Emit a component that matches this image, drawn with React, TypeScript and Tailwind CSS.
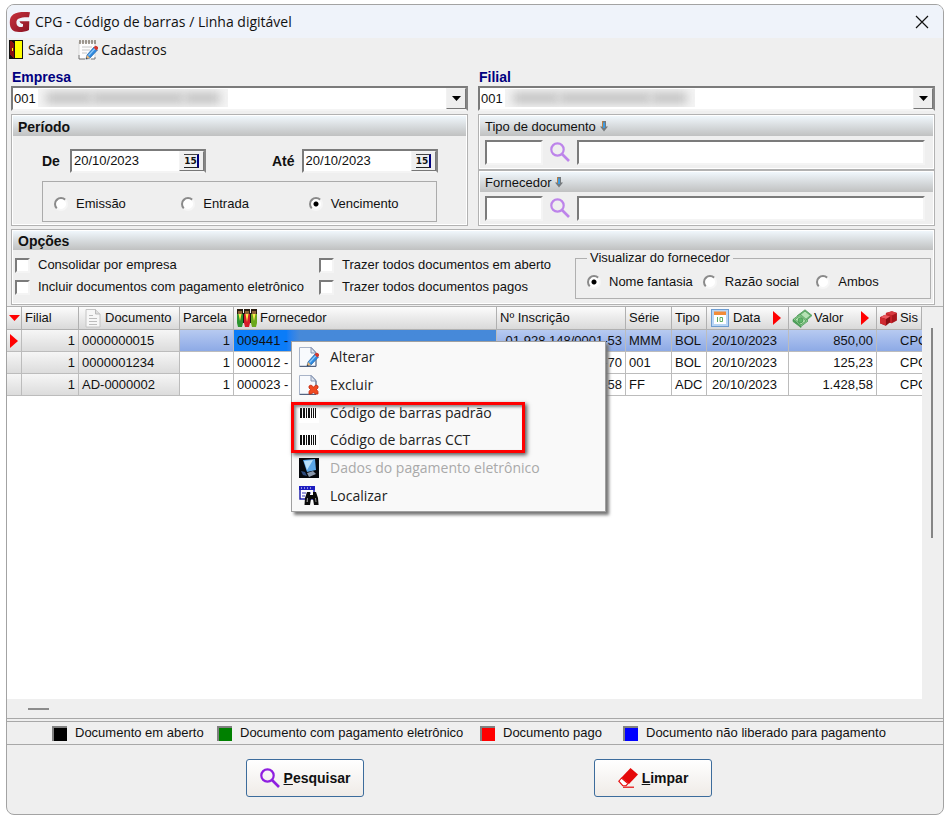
import { useState } from 'react';
import type { ReactNode } from 'react';

interface Row {
  filial: string;
  documento: string;
  parcela: string;
  fornecedor: string;
  inscricao: string;
  serie: string;
  tipo: string;
  data: string;
  valor: string;
}

const rows: Row[] = [
  { filial: '1', documento: '0000000015', parcela: '1', fornecedor: '009441 -', inscricao: '01.928.148/0001-53', serie: 'MMM', tipo: 'BOL', data: '20/10/2023', valor: '850,00' },
  { filial: '1', documento: '0000001234', parcela: '1', fornecedor: '000012 -', inscricao: '-70', serie: '001', tipo: 'BOL', data: '20/10/2023', valor: '125,23' },
  { filial: '1', documento: 'AD-0000002', parcela: '1', fornecedor: '000023 -', inscricao: '-58', serie: 'FF', tipo: 'ADC', data: '20/10/2023', valor: '1.428,58' },
];

const inset = 'border-2 border-t-[#7b7b7b] border-l-[#7b7b7b] border-r-[#f4f4f4] border-b-[#f4f4f4] bg-white';
const sunken = 'border-2 border-t-[#7b7b7b] border-l-[#7b7b7b] border-r-[#858585] border-b-[#f4f4f4] bg-white';

/* ---------- icons ---------- */

function LogoIcon() {
  return (
    <svg width="22" height="22" viewBox="0 0 22 22">
      <defs>
        <linearGradient id="logo" x1="0" y1="0" x2="1" y2="1">
          <stop offset="0" stopColor="#c8323c" />
          <stop offset="1" stopColor="#8a1224" />
        </linearGradient>
      </defs>
      <path
        d="M21 1.200C15 .6 8 .8 4.500 3.200 1.500 5.200.8 8 .8 11.500.8 18 4 21 10 21 14 21 17.500 20.500 20 19L20.300 10.200H10.500C11 12 12.500 12.800 14 13V15.600C12.500 16.200 11.500 16.200 10.500 16 8.300 15.500 7.300 13.500 7.400 11 7.700 7.500 11 6 20 6.200Z"
        fill="url(#logo)"
      />
    </svg>
  );
}

function DoorIcon() {
  return (
    <svg width="14" height="19" viewBox="0 0 14 19" shapeRendering="crispEdges">
      <rect width="14" height="19" fill="#111" />
      <path d="M6 1h7v17H6z" fill="#ff0" />
      <path d="M1 1h1l4 3v14H4l-3-3z" fill="#8a1010" />
      <path d="M5 3h1v15H5z" fill="#111" />
      <path d="M3 8h1v3H3z" fill="#ff0" />
    </svg>
  );
}

function Pencil() {
  return (
    <g>
      <path d="M8 19l1-4 7-8 3.500 3-7.500 8z" fill="#2e8ae0" stroke="#2264a8" strokeWidth=".7" />
      <path d="M10.500 15.500l6.500-7" stroke="#8fc9f8" strokeWidth="1.200" />
      <path d="M15.500 7.500l1.500-1.500q1-.6 2 .3l1 1q.6 1-.3 1.800l-1.200 1.300z" fill="#d3372c" />
      <path d="M8 19l1-4 3 3z" fill="#f0b877" />
      <path d="M8 19l.5-1.800 1.200 1.200z" fill="#222" />
    </g>
  );
}

function NotepadIcon() {
  return (
    <svg width="20" height="20" viewBox="0 0 20 20">
      <path d="M1 2h16v17H1z" fill="#fdfdfd" stroke="#d0d0d0" strokeWidth=".8" />
      <path d="M1 15v4h6M13 19h4v-2" fill="none" stroke="#666" strokeWidth=".8" />
      <path d="M2 0v4M5 0v4M8 0v4M11 0v4M14 0v4M17 0v4" stroke="#6b6152" strokeWidth="1.200" />
      <path d="M4 7h10M4 10h8M4 13h5" stroke="#c6c6c6" />
      <Pencil />
    </svg>
  );
}

function SearchIcon({ color }: { color: string }) {
  return (
    <svg width="20" height="20" viewBox="0 0 20 20" fill="none" stroke={color}>
      <circle cx="7.500" cy="7.500" r="6.200" strokeWidth="2.200" />
      <path d="M12 12l7 7" strokeWidth="2.600" />
    </svg>
  );
}

function DownArrowIcon() {
  return (
    <svg width="8" height="11" viewBox="0 0 8 11">
      <path d="M2 0h4v5.500h2L4 10.500 0 5.500h2z" fill="#75797c" />
      <path d="M3 1.500h2v5.500H3z" fill="#3f9be0" />
      <path d="M2 0h1v6H2z" fill="#c08040" />
    </svg>
  );
}

function PageIcon() {
  return (
    <svg width="16" height="19" viewBox="0 0 16 19">
      <path d="M1 .5h9.500L15 5v13H1z" fill="#f7f7f7" stroke="#c4c4c4" />
      <path d="M10.500.5V5H15" fill="#ddd" stroke="#bbb" />
      <path d="M4 6.500h4M4 9.500h8M4 12.500h8M4 15.500h8" stroke="#bdbdbd" />
    </svg>
  );
}

function PeopleIcon() {
  return (
    <svg width="20" height="19" viewBox="0 0 20 19">
      <path d="M0 0h6v6H0zM7 0h6v6H7zM14 0h6v6h-6z" fill="#2a1c10" />
      <path d="M1 2h4v3H1zM8 2h4v3H8zM15 2h4v3h-4z" fill="#8d6238" />
      <path d="M0 5h6v9l-1 4H1l-1-4z" fill="#2c9430" />
      <path d="M7 5h6v9l-1 4H8l-1-4z" fill="#d51c2a" />
      <path d="M14 5h6v9l-1 4h-4l-1-4z" fill="#6aa81c" />
      <path d="M1.500 5h3L3 12zM8.500 5h3L10 13zM15.500 5h3L17 12z" fill="#ffe94d" />
      <path d="M6 4h1v10H6zM13 4h1v10h-1z" fill="#151515" />
    </svg>
  );
}

function CalendarIcon() {
  return (
    <svg width="18" height="18" viewBox="0 0 18 18">
      <rect x=".5" y=".5" width="17" height="17" fill="#b9d6f6" stroke="#6e9cd0" />
      <rect x="3" y="3" width="12" height="12" fill="#fff" />
      <rect x="3" y="2.500" width="12" height="3.500" fill="#f28c38" />
      <path d="M6.500 8v5M9 8.500h2.500v4H9z" fill="none" stroke="#5fae62" />
    </svg>
  );
}

function MoneyIcon() {
  return (
    <svg width="21" height="19" viewBox="0 0 21 19" stroke="#3f8f4b" strokeWidth=".7">
      <path d="M5 7L13 .8l7 5.700-9 8z" fill="#7cc484" />
      <path d="M6.500 7L13 2l5.500 4.500L12 12z" fill="#b5e2b4" />
      <path d="M1 10.500L8 5l8 7-7 5.500z" fill="#8fd092" />
      <path d="M3 10.500L8 6.800l6 5.200-5 3.800z" fill="#b8e6b4" />
      <ellipse cx="8.500" cy="11.300" rx="2.400" ry="2.600" fill="#5fb56a" />
      <path d="M1 10.500v2l8 6v-1z" fill="#4fa65c" />
    </svg>
  );
}

function BlocksIcon() {
  return (
    <svg width="20" height="17" viewBox="0 0 20 17">
      <path d="M7 2l7-2 6 2v9l-6 3-7-2z" fill="#a8161c" />
      <path d="M7 2l7-2 6 2-6 3z" fill="#d83a40" />
      <path d="M7 2l7 3v9l-7-2z" fill="#cc262c" />
      <path d="M0 7l6-3 6 2v7l-5 4-7-3z" fill="#8a0d12" />
      <path d="M0 7l6-3 6 2-5 3z" fill="#ec5a60" />
      <path d="M0 7l7 2v8l-7-3z" fill="#cf2a30" />
    </svg>
  );
}

function SheetIcon({ children }: { children: ReactNode }) {
  return (
    <svg width="20" height="20" viewBox="0 0 20 20">
      <path d="M.5.5h12L17 5v14H.5z" fill="#f8fafd" stroke="#a9b4c8" />
      <path d="M.5 19.500h16.500V6" fill="none" stroke="#53627e" />
      <path d="M12 .5V6h5z" fill="#dfe5ef" stroke="#7d8cab" strokeWidth=".9" />
      {children}
    </svg>
  );
}

function DeleteMark() {
  return (
    <path d="M10 11l2-1 2.500 2L17 10l2 1v2l-1.500 1.500L19 16.500V19h-2.500l-2-1.500L12 19h-2v-2.500l1.500-2L10 13z" fill="#f04a20" stroke="#c22a10" strokeWidth=".8" />
  );
}

function BarcodeIcon() {
  return (
    <svg width="20" height="20" viewBox="0 0 20 20">
      <rect width="20" height="20" fill="#fff" />
      <path d="M1 5h2v10H1zM4 5h2v10H4zM7 5h1v10H7zM9 5h2v10H9zM12 5h1v10h-1zM14 5h1v10h-1zM16 5h1v10h-1z" fill="#111" />
    </svg>
  );
}

function MonitorIcon() {
  return (
    <svg width="20" height="20" viewBox="0 0 20 20">
      <rect width="20" height="20" fill="#05070c" />
      <path d="M4 2l12-1 1 11-9 2z" fill="#5ba6e8" />
      <path d="M5 3l9-1-6 10z" fill="#b8dffa" />
      <path d="M8 15l6-2 3 3-7 3z" fill="#8a97ab" />
      <path d="M2 13l4 1 2 4-4-1z" fill="#2d4a7c" />
    </svg>
  );
}

function BinocularsIcon() {
  return (
    <svg width="20" height="20" viewBox="0 0 20 20">
      <rect x="1" y="1" width="14" height="12" fill="#fff" stroke="#1818a8" strokeWidth="1.400" />
      <path d="M0 0h16v4H0z" fill="#1c1cc0" />
      <path d="M2 2h1M5 2h1M8 2h1M11 2h1" stroke="#fff" />
      <path d="M3 7h4M3 10h3M9 7h3" stroke="#3838b8" strokeWidth="1.200" />
      <path d="M8 6h3v3h3V6h3l2 6 .6 7H15l-1-6h-2l-1 6H5.500L6 12z" fill="#0a0a0a" />
      <path d="M8 12h1v4H7.500zM16 12h1l.5 4H16.500z" fill="#8b8b8b" />
    </svg>
  );
}

function EraserIcon() {
  return (
    <svg width="20" height="20" viewBox="0 0 20 20">
      <path d="M12.500 0l7.500 6.500-9 9.500-7.500-6.500z" fill="#e50909" />
      <path d="M3.500 10L.8 13.200l4 4.500H8l2-2.200z" fill="#fff" stroke="#e50909" strokeWidth="1.100" />
      <path d="M5 19.200h11" stroke="#e50909" strokeWidth="1.200" />
    </svg>
  );
}

/* ---------- small controls ---------- */

function RightMark() {
  return (
    <svg width="8" height="14" viewBox="0 0 8 14" className="shrink-0">
      <path d="M0 0l8 7-8 7z" fill="red" />
    </svg>
  );
}

function Radio({ name, label, defaultChecked }: { name: string; label: string; defaultChecked?: boolean }) {
  return (
    <label className="flex items-center gap-2 whitespace-nowrap">
      <input
        type="radio"
        name={name}
        defaultChecked={defaultChecked}
        className="h-[14px] w-[14px] shrink-0 appearance-none rounded-full border-2 border-t-[#8a8a8a] border-r-[#f6f6f6] border-b-[#f6f6f6] border-l-[#8a8a8a] bg-white checked:bg-[radial-gradient(circle,#000_0,#000_2px,#fff_3px)]"
      />
      {label}
    </label>
  );
}

function Check({ label }: { label: string }) {
  return (
    <label className="flex h-[22px] items-center gap-2 whitespace-nowrap">
      <input type="checkbox" className={`h-[15px] w-[15px] shrink-0 appearance-none checked:bg-[#444] ${inset}`} />
      {label}
    </label>
  );
}

function Combo({ id, label }: { id: string; label: string }) {
  return (
    <div className="min-w-0">
      <label htmlFor={id} className="block pl-px text-[14px] leading-4 font-bold text-[#000080]">{label}</label>
      <div className="relative mt-px">
        <select id={id} className={`block h-[25px] w-full appearance-none pl-px ${sunken}`}>
          <option>001</option>
        </select>
        {/* hidden company name */}
        <div className="pointer-events-none absolute top-[3px] left-[27px] flex h-[18px] w-[190px] items-center overflow-hidden bg-[#f4f4f4] px-2">
          <div className="h-3 w-[46px] bg-[#c4c4c4] blur-[5px]" />
          <div className="h-3 flex-1 bg-[#c4c4c4] blur-[5px]" />
          <div className="h-3 w-[36px] bg-[#c4c4c4] blur-[5px]" />
        </div>
        <div className="pointer-events-none absolute top-[2px] right-[2px] flex h-[21px] w-[20px] items-center justify-center border border-t-[#f2f2f2] border-r-[#777] border-b-[#777] border-l-[#f2f2f2] bg-[#efefef]">
          <svg width="9" height="5" viewBox="0 0 9 5"><path d="M0 0h9L4.500 5z" /></svg>
        </div>
      </div>
    </div>
  );
}

function DateField({ id, label }: { id: string; label: string }) {
  const [value, setValue] = useState('20/10/2023');
  return (
    <div className="flex items-center gap-[7px]">
      <label htmlFor={id} className="min-w-[21px] text-[14px] font-bold">{label}</label>
      <div className={`flex h-[24px] w-[136px] ${sunken}`}>
        <input id={id} value={value} onChange={(e) => setValue(e.target.value)} className="w-full min-w-0 pl-[2px] outline-none" />
        <button type="button" className="flex w-[25px] shrink-0 items-center justify-center border border-t-[#f4f4f4] border-r-[#777] border-b-[#777] border-l-[#f4f4f4] bg-[#efefef]">
          <span className="h-[14px] w-[15px] border-t border-r-2 border-b border-t-[#444] border-r-[#000080] border-b-[#222] text-center font-['DejaVu_Sans'] text-[9px] leading-3 font-bold">15</span>
        </button>
      </div>
    </div>
  );
}

function Panel({ children }: { children: ReactNode }) {
  return (
    <section className="border border-[#b2b2b2] bg-[#efefef] p-px shadow-[inset_1px_1px_0_#fff,inset_-1px_-1px_0_#fff]">
      {children}
    </section>
  );
}

function LookupPanel({ id, title }: { id: string; title: string }) {
  return (
    <Panel>
      <div className="flex h-5 items-center gap-1 bg-linear-to-b from-[#f0f7fc] to-[#c0c1c1] pt-px pl-[5px]">
        <label htmlFor={id}>{title}</label>
        <DownArrowIcon />
      </div>
      <div className="flex h-[32px] items-center pr-2 pl-[5px]">
        <input id={id} className={`h-[25px] w-[58px] ${inset}`} />
        <button type="button" aria-label={`Pesquisar ${title}`} className="mx-[7px]">
          <SearchIcon color="#bd84ea" />
        </button>
        <input aria-label={`Descrição ${title}`} className={`h-[25px] min-w-0 flex-1 ${inset}`} />
      </div>
    </Panel>
  );
}

function MenuItem({ icon, label, disabled }: { icon: ReactNode; label: string; disabled?: boolean }) {
  return (
    <button type="button" disabled={disabled} className="flex items-center gap-[11px] pl-[7px] text-[#222] disabled:text-[#a9a9a9]">
      {icon}
      {label}
    </button>
  );
}

function Legend({ color, label }: { color: string; label: string }) {
  return (
    <div className="flex items-center gap-2 whitespace-nowrap">
      <span className={`h-[15px] w-[15px] border-t-2 border-l-2 border-[#808080] ${color}`} />
      {label}
    </div>
  );
}

const th = 'h-[23px] overflow-hidden border-r border-b border-[#b0b0b0] px-[3px] text-left font-normal whitespace-nowrap bg-linear-to-b from-[#fcfcfc] to-[#d9d9d9]';
const td = 'h-[22px] overflow-hidden border-r border-b border-[#bcbcbc] px-[3px] whitespace-nowrap';
const fixedCell = 'bg-linear-to-b from-[#f6f6f6] to-[#dcdcdc]';

export default function App() {
  return (
    <div className="flex min-h-screen flex-col bg-white pt-1 pr-[5px] pb-[5px] pl-[6px] font-['Liberation_Sans',Arial,sans-serif] text-[13px] leading-4 text-[#111]">
      <main className="flex flex-1 flex-col overflow-hidden rounded-lg border border-[#a3a3a3] bg-[#efefef]">
        <header className="flex h-[33px] items-center bg-[#eff3fa] pr-[14px] pl-[2px] font-['Open_Sans',sans-serif] text-[14px]">
          <LogoIcon />
          <h1 className="ml-1 flex-1">CPG - Código de barras / Linha digitável</h1>
          <button type="button" aria-label="Fechar">
            <svg width="14" height="14" viewBox="0 0 14 14" stroke="#111" strokeWidth="1.200"><path d="M1 1l12 12M13 1L1 13" /></svg>
          </button>
        </header>

        <nav className="flex h-[23px] items-center pl-[2px] font-['Open_Sans',sans-serif] text-[14px]">
          <button type="button" className="flex items-center gap-[5px]"><DoorIcon />Saída</button>
          <button type="button" className="ml-[15px] flex items-center gap-[3px]"><NotepadIcon />Cadastros</button>
        </nav>

        <div className="grid grid-cols-2 gap-x-[10px] gap-y-[3px] pt-2 pr-2 pl-1">
          <Combo id="empresa" label="Empresa" />
          <Combo id="filial" label="Filial" />

          <Panel>
            <h2 className="flex h-5 items-center bg-linear-to-b from-[#f0f7fc] to-[#c0c1c1] pt-px pl-[5px] text-[14px] font-bold">Período</h2>
            <div className="mt-[13px] flex gap-[66px] pl-[29px]">
              <DateField id="de" label="De" />
              <DateField id="ate" label="Até" />
            </div>
            <div className="mt-2 mr-[29px] ml-[29px] grid h-[41px] grid-cols-3 items-center border border-[#ababab] pt-1 pl-[11px]">
              <Radio name="periodo" label="Emissão" />
              <Radio name="periodo" label="Entrada" />
              <Radio name="periodo" label="Vencimento" defaultChecked />
            </div>
          </Panel>
          <div className="flex flex-col justify-between">
            <LookupPanel id="tipo-documento" title="Tipo de documento" />
            <LookupPanel id="fornecedor" title="Fornecedor" />
          </div>

          <div className="col-span-2">
            <Panel>
              <h2 className="flex h-[19px] items-center bg-linear-to-b from-[#f0f7fc] to-[#c0c1c1] pl-[5px] text-[14px] font-bold">Opções</h2>
              <div className="flex h-[53px] pr-[2px] pl-[2px]">
                <div className="w-[304px] pt-1">
                  <Check label="Consolidar por empresa" />
                  <Check label="Incluir documentos com pagamento eletrônico" />
                </div>
                <div className="flex-1 pt-1">
                  <Check label="Trazer todos documentos em aberto" />
                  <Check label="Trazer todos documentos pagos" />
                </div>
                <fieldset className="h-[49px] w-[356px] border border-[#b0b0b0] px-[11px]">
                  <legend className="px-[3px]">Visualizar do fornecedor</legend>
                  <div className="flex gap-[10px] pt-2">
                    <Radio name="visualizar" label="Nome fantasia" defaultChecked />
                    <Radio name="visualizar" label="Razão social" />
                    <div className="ml-[7px]"><Radio name="visualizar" label="Ambos" /></div>
                  </div>
                </fieldset>
              </div>
            </Panel>
          </div>
        </div>

        <div className="relative mt-px flex flex-1 border-t border-[#b0b0b0]">
          <div className="min-w-0 flex-1 overflow-hidden bg-white">
            <table className="w-full table-fixed border-separate border-spacing-0">
              <colgroup>
                <col className="w-[15px]" />
                <col className="w-[57px]" />
                <col className="w-[101px]" />
                <col className="w-[54px]" />
                <col />
                <col className="w-[129px]" />
                <col className="w-[46px]" />
                <col className="w-[35px]" />
                <col className="w-[82px]" />
                <col className="w-[88px]" />
                <col className="w-[45px]" />
              </colgroup>
              <thead>
                <tr>
                  <th className="h-[23px] border-r border-b border-[#b0b0b0] bg-linear-to-b from-[#fcfcfc] to-[#d9d9d9] pl-[2px]">
                    <svg width="11" height="6" viewBox="0 0 11 6"><path d="M0 0h11L5.500 6z" fill="red" /></svg>
                  </th>
                  <th className={th}>Filial</th>
                  <th className={th}><div className="flex items-center gap-1 pl-[3px]"><PageIcon />Documento</div></th>
                  <th className={th}>Parcela</th>
                  <th className={th}><div className="flex items-center gap-[3px]"><PeopleIcon />Fornecedor</div></th>
                  <th className={th}>Nº Inscrição</th>
                  <th className={th}>Série</th>
                  <th className={th}>Tipo</th>
                  <th className={th}><div className="flex items-center gap-1 pl-px"><CalendarIcon />Data<span className="ml-auto pr-1"><RightMark /></span></div></th>
                  <th className={th}><div className="flex items-center gap-px"><MoneyIcon />Valor<span className="ml-auto pr-1"><RightMark /></span></div></th>
                  <th className={th}><div className="flex items-center gap-[3px]"><BlocksIcon />Sis</div></th>
                </tr>
              </thead>
              <tbody>
                {rows.map((row, i) => (
                  <tr key={row.documento} className={i === 0 ? 'bg-linear-to-b from-[#b7caf1] to-[#8ba8e5]' : 'bg-white'}>
                    <td className={`${td} ${fixedCell}`}>{i === 0 && <RightMark />}</td>
                    <td className={`${td} ${fixedCell} text-right`}>{row.filial}</td>
                    <td className={`${td} ${fixedCell}`}>{row.documento}</td>
                    <td className={`${td} text-right`}>{row.parcela}</td>
                    <td className={i === 0 ? `${td} bg-linear-to-r from-[#0a7cf8] from-20% to-[#4689d9] to-25%` : td}>{row.fornecedor}</td>
                    <td className={`${td} text-right`}>{row.inscricao}</td>
                    <td className={td}>{row.serie}</td>
                    <td className={td}>{row.tipo}</td>
                    <td className={`${td} pl-[5px]`}>{row.data}</td>
                    <td className={`${td} text-right`}>{row.valor}</td>
                    <td className="h-[22px] overflow-hidden border-b border-[#bcbcbc] pl-[23px] whitespace-nowrap">CPG</td>
                  </tr>
                ))}
              </tbody>
            </table>
          </div>
          <div className="w-[21px] shrink-0 pt-[21px] pl-[9px]">
            <div className="h-[210px] w-[2px] bg-[#858585]" />
          </div>

          <div className="absolute top-[34px] left-[284px] grid h-[171px] w-[315px] grid-rows-6 border border-[#a0a0a0] bg-[#f9f9f9] pt-px pb-px font-['Open_Sans',sans-serif] text-[14px] shadow-[3px_3px_3px_#777]">
            <MenuItem icon={<SheetIcon><Pencil /></SheetIcon>} label="Alterar" />
            <MenuItem icon={<SheetIcon><DeleteMark /></SheetIcon>} label="Excluir" />
            <MenuItem icon={<BarcodeIcon />} label="Código de barras padrão" />
            <MenuItem icon={<BarcodeIcon />} label="Código de barras CCT" />
            <MenuItem icon={<MonitorIcon />} label="Dados do pagamento eletrônico" disabled />
            <MenuItem icon={<BinocularsIcon />} label="Localizar" />
            <div className="pointer-events-none absolute top-[60px] left-[-1px] h-[51px] w-[234px] border-3 border-[#f00] shadow-[2px_2px_4px_#555,inset_2px_2px_3px_#888]" />
          </div>
        </div>

        <div className="h-5 border-b border-[#a8a8a8] pt-[9px] pl-[21px]">
          <div className="h-[2px] w-[21px] bg-[#8c8c8c]" />
        </div>

        <div className="mt-[2px] grid h-[24px] grid-cols-[165px_263px_143px_1fr] items-center border-y border-[#a8a8a8] pl-[45px]">
          <Legend color="bg-black" label="Documento em aberto" />
          <Legend color="bg-[#008000]" label="Documento com pagamento eletrônico" />
          <Legend color="bg-[#ff0000]" label="Documento pago" />
          <Legend color="bg-[#0000ff]" label="Documento não liberado para pagamento" />
        </div>

        <footer className="flex h-[69px] items-start justify-center gap-[230px] pt-[14px] pl-2">
          <button type="button" className="flex h-[38px] w-[118px] items-center justify-center gap-1 rounded-[3px] border border-[#3c6c9c] bg-linear-to-b from-white to-[#efebe7] text-[14px] font-bold">
            <SearchIcon color="#8f1fe0" />
            <span><u>P</u>esquisar</span>
          </button>
          <button type="button" className="flex h-[38px] w-[118px] items-center justify-center gap-1 rounded-[3px] border border-[#3c6c9c] bg-linear-to-b from-white to-[#efebe7] text-[14px] font-bold">
            <EraserIcon />
            <span><u>L</u>impar</span>
          </button>
        </footer>
      </main>
    </div>
  );
}
